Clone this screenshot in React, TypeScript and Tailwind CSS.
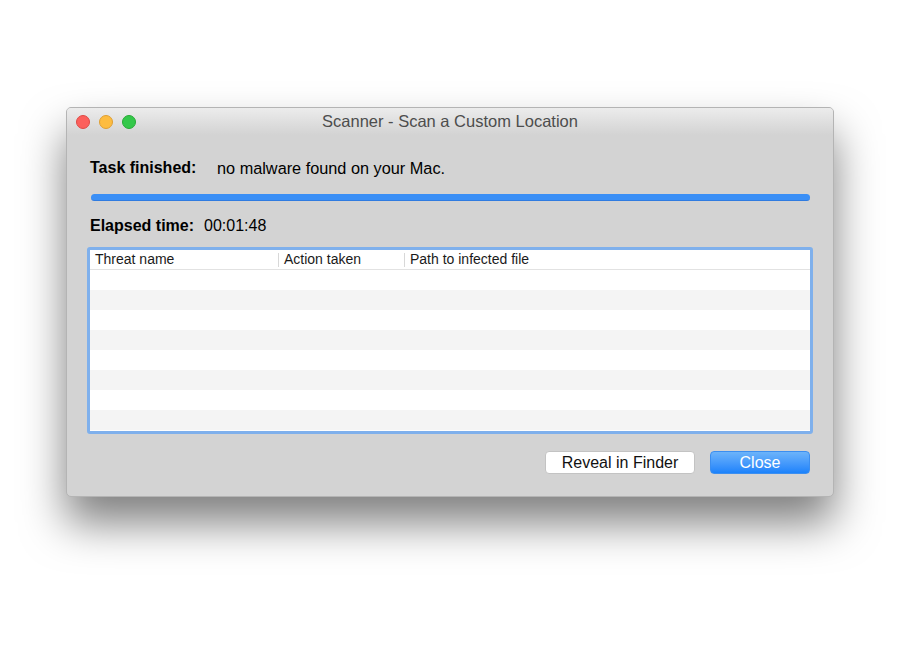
import { memo } from 'react'

const rows = [0, 1, 2, 3, 4, 5, 6, 7]

const TrafficLights = memo(() => (
  <div className="flex items-center gap-[9px]">
    <span className="w-[14px] h-[14px] rounded-full bg-[#fc605c] border border-[#de4a45]" />
    <span className="w-[14px] h-[14px] rounded-full bg-[#fdbc40] border border-[#de9f34]" />
    <span className="w-[14px] h-[14px] rounded-full bg-[#34c84a] border border-[#27aa35]" />
  </div>
))

export default function App() {
  return (
    <div className="w-[900px] h-[662px] bg-white pt-[107px] pl-[66px] font-['Liberation_Sans',Arial,sans-serif]">
      <div className="w-[768px] h-[390px] rounded-[5px] border border-[#b4b4b4] bg-[#d3d3d3] shadow-[0_26px_44px_rgba(0,0,0,0.5)] flex flex-col overflow-hidden">
        {/* title bar */}
        <div className="relative h-[27px] flex items-center pl-[9px] bg-gradient-to-b from-[#ececec] to-[#d3d3d3]">
          <TrafficLights />
          <div className="absolute inset-0 flex items-center justify-center text-[16.5px] text-[#4d4d4d] pointer-events-none">
            Scanner - Scan a Custom Location
          </div>
        </div>

        <div className="flex flex-col px-[20px] pt-[23px]">
          <div className="flex items-center h-[20px] pl-[3px] text-[16px] text-black">
            <span className="font-bold w-[127px]">Task finished:</span>
            <span className="text-[16.3px]">no malware found on your Mac.</span>
          </div>

          <div className="mt-[16px] ml-[4px] mr-[3px] h-[7px] rounded-full bg-[#3a8ff6] border-b border-[#2f7be0]" />

          <div className="mt-[15px] flex items-center h-[20px] pl-[3px] text-[16px] text-black">
            <span className="font-bold w-[114px]">Elapsed time:</span>
            <span>00:01:48</span>
          </div>

          {/* results table */}
          <div className="mt-[11px] h-[187px] rounded-[3px] border-[3px] border-[#7fb0ec] bg-white flex flex-col overflow-hidden">
            <div className="flex h-[20px] shrink-0 items-center border-b border-[#e2e2e2] text-[14px] text-[#1a1a1a]">
              <div className="w-[189px] pl-[5px] border-r border-[#d8d8d8] leading-[13px] h-[14px]">Threat name</div>
              <div className="w-[126px] pl-[5px] border-r border-[#d8d8d8] leading-[13px] h-[14px]">Action taken</div>
              <div className="flex-1 pl-[5px] leading-[13px] h-[14px]">Path to infected file</div>
            </div>
            {rows.map((r) => (
              <div key={r} className={r % 2 === 0 ? 'h-[20px] shrink-0 bg-white' : 'h-[20px] shrink-0 bg-[#f4f4f4]'} />
            ))}
          </div>

          <div className="mt-[17px] flex justify-end gap-[15px] pr-[3px]">
            <button className="w-[150px] h-[23px] rounded-[4px] bg-white border border-[#c3c3c3] text-[16px] text-[#111] leading-none">
              Reveal in Finder
            </button>
            <button className="w-[100px] h-[23px] rounded-[4px] bg-gradient-to-b from-[#6cb3fa] to-[#1a82fb] border border-[#3b8ef0] text-[16px] text-white leading-none">
              Close
            </button>
          </div>
        </div>
      </div>
    </div>
  )
}
